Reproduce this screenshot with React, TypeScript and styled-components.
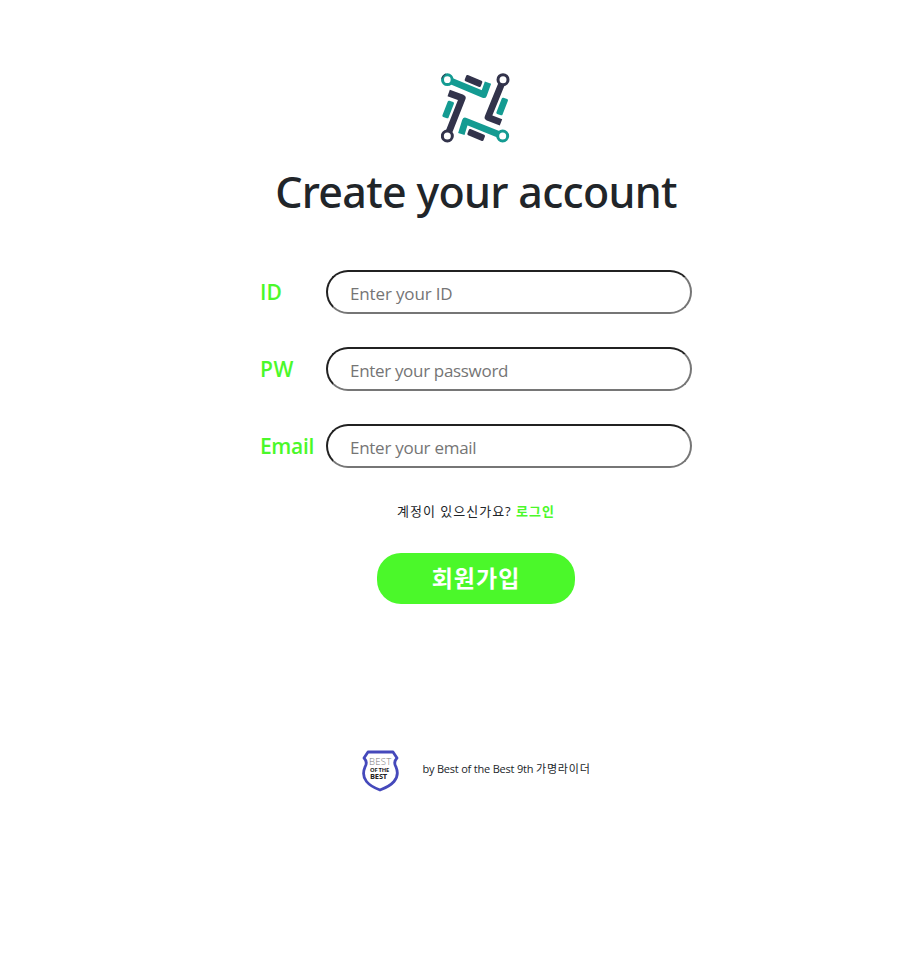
import React from "react";
import styled, { createGlobalStyle } from "styled-components";

const GlobalStyle = createGlobalStyle`
  *, *::before, *::after { box-sizing: border-box; }
  body {
    margin: 0;
    background: #fff;
    color: #212529;
    font-family: "Open Sans", "Noto Sans CJK KR", sans-serif;
  }
`;

const Page = styled.main`
  display: flex;
  flex-direction: column;
  align-items: center;
  min-height: 966px;
  padding: 73px 0 0 47px;
`;

const Logo = styled.svg`
  display: block;
  width: 70px;
  height: 70px;
`;

const Title = styled.h1`
  margin: 19px 0 0;
  height: 60px;
  font: 500 43px/60px "Noto Sans", sans-serif;
  letter-spacing: -0.7px;
  white-space: nowrap;
`;

const Form = styled.form`
  display: flex;
  flex-direction: column;
  align-items: center;
  width: 432px;
  margin-top: 48px;
`;

const Fields = styled.div`
  display: flex;
  flex-direction: column;
  gap: 33px;
  width: 100%;
`;

const Field = styled.label`
  display: grid;
  grid-template-columns: 66px 366px;
  align-items: center;
  height: 44px;
`;

const FieldName = styled.span<{ $spacing: number }>`
  color: #4bf82a;
  font: 600 21px/30px "Open Sans", sans-serif;
  letter-spacing: ${(p) => p.$spacing}px;
`;

const Input = styled.input<{ $spacing: number }>`
  width: 366px;
  height: 44px;
  padding: 3px 22px 0;
  border: 2px solid;
  border-color: #212121 #767676 #767676 #212121;
  border-radius: 22px;
  background: #fff;
  outline: none;
  font: 400 17px "Open Sans", sans-serif;
  letter-spacing: ${(p) => p.$spacing}px;
  &::placeholder { color: #757575; opacity: 1; }
`;

const Prompt = styled.p`
  margin: 33px 0 0;
  height: 20px;
  font-size: 13px;
  line-height: 20px;
  letter-spacing: 1px;
  white-space: nowrap;
`;

const LoginLink = styled.a`
  color: #4bf82a;
  font-weight: 700;
  text-decoration: none;
`;

const Submit = styled.button`
  width: 198px;
  height: 51px;
  margin-top: 32px;
  padding: 0 0 4px;
  border: 0;
  border-radius: 24px;
  background: #4bf82a;
  color: #fff;
  font: 700 23px/46px "Noto Sans CJK KR", sans-serif;
  letter-spacing: 1px;
`;

const Footer = styled.footer`
  display: flex;
  align-items: center;
  gap: 22px;
  margin-top: 146px;
  font-size: 11px;
  letter-spacing: -0.2px;
  white-space: nowrap;
`;

const Shield = styled.svg`
  display: block;
  width: 39px;
  height: 42px;
`;

const Credit = styled.span`
  padding-bottom: 4px;
  line-height: 18px;
`;

const TeamName = styled.span`
  letter-spacing: 0.8px;
`;

const TEAL = "#149b92";
const NAVY = "#32334b";

const fields = [
  { name: "ID", type: "text", hint: "Enter your ID", nameSpacing: 0, spacing: -0.15 },
  { name: "PW", type: "password", hint: "Enter your password", nameSpacing: 0.5, spacing: -0.32 },
  { name: "Email", type: "email", hint: "Enter your email", nameSpacing: -0.35, spacing: -0.27 },
];

function CircuitLogo() {
  return (
    <Logo viewBox="33 33 210 210" fill="none" aria-label="logo">
      <g strokeWidth="20" strokeLinejoin="round">
        <path d="M63 57 161 98 174 62" stroke={TEAL} />
        <path d="M215 65 174 166 213 181" stroke={NAVY} />
        <path d="M206 217 106 177 94 216" stroke={TEAL} />
        <path d="M57 209 97 108 56 93" stroke={NAVY} />
      </g>
      <g strokeWidth="8" strokeLinejoin="round">
        <path d="M112 43 153 60 149 71 108 54Z" stroke={NAVY} fill={NAVY} />
        <path d="M219 111 230 115 214 156 203 152Z" stroke={TEAL} fill={TEAL} />
        <path d="M120 205 161 222 157 233 116 216Z" stroke={NAVY} fill={NAVY} />
        <path d="M57 120 68 124 52 165 41 161Z" stroke={TEAL} fill={TEAL} />
      </g>
      <g strokeWidth="9" fill="#fff">
        <circle cx="52" cy="53" r="14.5" stroke={TEAL} />
        <circle cx="219" cy="53" r="15" stroke={NAVY} />
        <circle cx="218" cy="222" r="15" stroke={TEAL} />
        <circle cx="52" cy="222" r="15" stroke={NAVY} />
      </g>
      <path d="M35 50q3-11 12-14" stroke={NAVY} strokeWidth="3" />
    </Logo>
  );
}

function BestShield() {
  return (
    <Shield viewBox="0 0 39 42" aria-label="Best of the Best">
      <path
        d="M7 2H32L36 8Q32 12 35 17C40 29 30 36 19 40C8 36-1 29 4 17Q7 12 3 8Z"
        fill="#fff"
        stroke="#4549bb"
        strokeWidth="2.8"
        strokeLinejoin="round"
      />
      <g fontFamily="Open Sans, sans-serif" textAnchor="middle" fill="#222">
        <text x="19" y="15" fontSize="9.5" fontWeight="300" fill="#777" textLength="22">BEST</text>
        <text x="18.5" y="21.5" fontSize="5.2" fontWeight="700" textLength="19" lengthAdjust="spacingAndGlyphs">OF THE</text>
        <text x="17.5" y="29" fontSize="7.2" fontWeight="700" textLength="17" lengthAdjust="spacingAndGlyphs">BEST</text>
      </g>
    </Shield>
  );
}

export default function App() {
  return (
    <>
      <GlobalStyle />
      <Page>
        <CircuitLogo />
        <Title>Create your account</Title>
        <Form>
          <Fields>
            {fields.map((f) => (
              <Field key={f.name}>
                <FieldName $spacing={f.nameSpacing}>{f.name}</FieldName>
                <Input type={f.type} placeholder={f.hint} $spacing={f.spacing} />
              </Field>
            ))}
          </Fields>
          <Prompt>
            계정이 있으신가요? <LoginLink href="#">로그인</LoginLink>
          </Prompt>
          <Submit type="button">회원가입</Submit>
        </Form>
        <Footer>
          <BestShield />
          <Credit>
            by Best of the Best 9th <TeamName>가명라이더</TeamName>
          </Credit>
        </Footer>
      </Page>
    </>
  );
}
